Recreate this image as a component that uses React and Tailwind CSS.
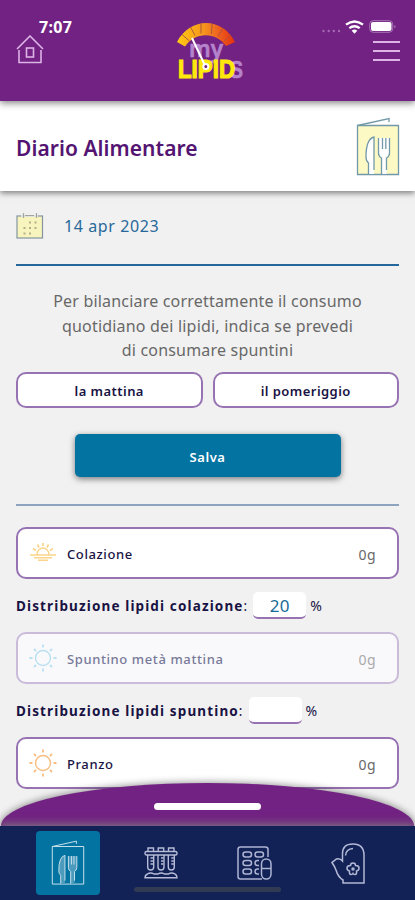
const FONT = "font-['Noto_Sans','Open_Sans',sans-serif]";

function HomeIcon() {
  return (
    <svg className="block" width="28" height="30" viewBox="0 0 28 30" fill="none" stroke="#dcb4e6" strokeWidth="1.6">
      <path d="M1 14 14 1l13 13" />
      <path d="M3 15v12.500h22V15" />
      <rect x="10.500" y="13" width="7" height="9" />
    </svg>
  );
}

function Logo() {
  return (
    <svg className="block overflow-visible" width="72" height="60" viewBox="0 0 72 60">
      <defs>
        <linearGradient id="gauge" x1="0" x2="1" y1="0" y2="0">
          <stop offset="0" stopColor="#ffcb12" />
          <stop offset="0.45" stopColor="#f6961d" />
          <stop offset="0.7" stopColor="#ee6420" />
          <stop offset="1" stopColor="#e5300f" />
        </linearGradient>
      </defs>
      <path d="M2 20C15-5 47-5.500 60 20L51 24C41 9.500 20 9.500 10 24.500Z" fill="url(#gauge)" />
      <path d="M7 12.500 14.500 19M15.500 5 20 13.500M26 1.500v10M37 1.500l-.5 10.500M48 6l-5 8.500M56 13l-7 6" stroke="#a8503c" strokeWidth="0.900" />
      <text x="14" y="35" textLength="34" lengthAdjust="spacingAndGlyphs" fontSize="24" fontWeight="600" fill="#b583cc" stroke="#b583cc" strokeWidth="0.600" className={FONT}>my</text>
      <text x="55" y="56" textLength="13" lengthAdjust="spacingAndGlyphs" fontSize="24" fontWeight="700" fill="#b583cc" stroke="#b583cc" strokeWidth="0.600" className="font-['Liberation_Sans',sans-serif]">S</text>
      <text x="3" y="56" textLength="57" lengthAdjust="spacingAndGlyphs" fontSize="26" fontWeight="700" fill="#ffe80c" stroke="#ffe80c" strokeWidth="1.200" className="font-['Liberation_Sans',sans-serif]">LIPID</text>
      <path d="M17 16 29.500 42.500" stroke="#fff" strokeWidth="2" />
      <circle cx="30.800" cy="44.500" r="2.500" fill="#722282" stroke="#fff" strokeWidth="2" />
    </svg>
  );
}

function StatusIcons() {
  return (
    <svg className="block" width="80" height="16" viewBox="-4 0 80 16">
      <g fill="#a568b5">
        <circle cx="-0.500" cy="11" r="1.200" />
        <circle cx="4.700" cy="11" r="1.200" />
        <circle cx="9.800" cy="11" r="1.200" />
        <circle cx="15" cy="11" r="1.200" />
      </g>
      <g fill="none" stroke="#fff" strokeWidth="2.300">
        <path d="M22 4.700q8.500-6.500 17 0" />
        <path d="M25.300 8.200q5.200-4 10.400 0" />
      </g>
      <path d="M27.700 10.700q2.800-2.200 5.600 0l-2.800 3Z" fill="#fff" />
      <rect x="45.700" y="0.700" width="23" height="11.600" rx="3.500" fill="none" stroke="#a873b6" />
      <rect x="47" y="2" width="20.500" height="9" rx="2" fill="#fff" />
      <path d="M70.500 5q2 1.700 0 3.500Z" fill="#b98cc5" />
    </svg>
  );
}

function MenuBookIcon({ className, stroke, fill, inner }) {
  return (
    <svg className={className} viewBox="0 0 44 60" fill="none" stroke={stroke} strokeWidth="1.300">
      <path d="M1.500 8.500h41V57.500h-41Z" fill={fill} />
      <path d="M1.500 8.500 33 1.500v3.500" />
      <path d="M12.500 57V46q-2.500-2-2.500-6 0-18 8-20V57Z" fill={inner} stroke="none" />
      <path d="M25.500 57V41q-3-1.500-3-5V21h11v15q0 3.500-3 5V57Z" fill={inner} stroke="none" />
      <path d="M12.500 57V46q-2.500-2-2.500-6 0-18 8-20V53M25.500 57V41q-3-1.500-3-5V21M26.500 21v11M29.800 21v11M33.500 21v15q0 3.500-3 5V53" />
    </svg>
  );
}

function CalendarIcon() {
  return (
    <svg className="block" width="28" height="26" viewBox="0 0 28 26">
      <rect x="1" y="3" width="25.500" height="22" fill="#f7f4bd" stroke="#8494a0" strokeWidth="1.200" />
      <path d="M5 3h17" stroke="#f1f1f1" strokeWidth="1.500" />
      <path d="M7.500 0v5M20.500 0v5M9 2.500h9" stroke="#a5a5a0" strokeWidth="1.200" />
      <path d="M13 8.500h2v2h-2zM18.500 8.500h2v2h-2zM7.500 14h2v2h-2zM13 14h2v2h-2zM18.500 14h2v2h-2zM7.500 19.500h2v2h-2zM13 19.500h2v2h-2z" fill="#b5af8b" />
    </svg>
  );
}

function SunIcon({ color }) {
  return (
    <svg className="block" width="28" height="28" viewBox="0 0 28 28" fill="none" stroke={color} strokeWidth="1.400">
      <circle cx="14" cy="14" r="7.500" />
      <path d="M14 .5v3M14 24.500v3M.5 14h3M24.500 14h3M5 5l2 2M21 21l2 2M5 23l2-2M21 7l2-2" strokeWidth="1.800" />
    </svg>
  );
}

function SunriseIcon() {
  return (
    <svg className="block" width="28" height="28" viewBox="0 0 28 28" fill="none" stroke="#fbd58b" strokeWidth="1.400">
      <path d="M8 15.500a6 6.500 0 0 1 12 0M1 16h26M5 18.800h18M9 21.200h10" />
      <path d="M14 4v3M8.500 5.500l1.500 3M19.500 5.500 18 8.500M4 9.500l3 2M24 9.500l-3 2" strokeWidth="1.700" />
    </svg>
  );
}

function TubesIcon() {
  return (
    <svg className="block" width="34" height="32" viewBox="0 0 34 32" fill="none" stroke="#b6bcd8" strokeWidth="1.400">
      <rect x="1" y="4.500" width="32" height="3.500" rx="1.500" />
      <path d="M4 4V1h5.500v3M14.200 4V1h5.500v3M24.500 4V1H30v3" />
      <path d="M3.700 8v12q0 3 3 3t3-3V8M14 8v12q0 3 3 3t3-3V8M24.300 8v12q0 3 3 3t3-3V8" />
      <path d="M6.500 11h2.500M6.500 14h2.500M6.500 17h2.500M17 11h2.500M17 14h2.500M17 17h2.500M27.300 11h2.500M27.300 14h2.500M27.300 17h2.500" />
      <path d="M3.500 27q3-2 6.500 0h4q3-2 6.500 0h4q3-2 6.500 0 2 1 2 3.800H1Q1 28 3.500 27Z" />
    </svg>
  );
}

function PillsIcon() {
  return (
    <svg className="block" width="35" height="34" viewBox="0 0 35 34" fill="none" stroke="#aeb5d3" strokeWidth="1.500">
      <path d="M31 11V3.500Q31 1 28.500 1h-25Q1 1 1 3.500v27Q1 33 3.500 33H25" />
      <rect x="6" y="6" width="8.500" height="5" rx="2.500" />
      <rect x="18" y="6" width="8.500" height="5" rx="2.500" />
      <rect x="6" y="14.500" width="8.500" height="5" rx="2.500" />
      <rect x="6" y="23" width="8.500" height="5" rx="2.500" />
      <path d="M22 14.500h-1.500a2.500 2.500 0 0 0 0 5H22M22 23h-1.500a2.500 2.500 0 0 0 0 5H22" />
      <rect x="24.500" y="13" width="9.500" height="20" rx="4.700" />
      <path d="M24.500 22.500H34" />
    </svg>
  );
}

function MittIcon() {
  return (
    <svg className="block" width="34" height="41" viewBox="0 0 34 41" fill="none" stroke="#b3b9d6" strokeWidth="1.500">
      <path d="M12 40h21V12.500Q33 1 22 1T11.500 11.500v6.500Q9 15 5.500 16L1 19.500Q4 24 5 27q2 7 7 10Z" />
      <path d="M14.500 12.500Q15 6 22 5.500" />
      <path d="M19.500 22.500Q19.500 20 22 20t2.500 2.500Q28 22.500 28 25t-2.500 3Q26 31.500 24 31.500 22.500 31.500 22 30.500 21.500 31.500 20 31.500 18 31.500 18.500 28 16 27.500 16 25t3.500-2.500Z" />
      <circle cx="22" cy="26" r="1" />
    </svg>
  );
}

function MealCard({ icon, name, faded }) {
  return (
    <div className={`flex h-[52px] items-center rounded-[10px] border-2 pr-[21px] pl-[11px] ${faded ? "border-[#cabbda] bg-[#f9f9fb]" : "border-[#9873b3] bg-white"}`}>
      <div className="w-[38px]">{icon}</div>
      <span className={`pt-[4px] text-[13px] font-medium tracking-[0.6px] ${faded ? "text-[#78799a]" : "text-[#191344]"}`}>{name}</span>
      <span className={`ml-auto pt-[4px] text-[14px] tracking-[0.4px] ${faded ? "text-[#aaaaaa]" : "text-[#686868]"}`}>0g</span>
    </div>
  );
}

function Distribution({ label, value }) {
  return (
    <div className="flex h-[27px] items-center text-[#191344]">
      <span className="pt-[2px] text-[13.5px] font-bold tracking-[1.130px] whitespace-nowrap">{label}<span className="font-normal">:</span></span>
      <div className="ml-[5px] flex h-[27px] w-[53px] items-center justify-center rounded-[5px] border-b-2 border-[#9873b3] bg-white pt-[3px] text-[17px] tracking-[0.4px] text-[#176b99]">{value}</div>
      <span className="ml-[4px] pt-[1px] text-[14px]">%</span>
    </div>
  );
}

export default function App() {
  return (
    <div className={`flex h-[900px] w-[415px] flex-col overflow-hidden bg-[#f1f1f1] ${FONT}`}>
      {/* Top bar */}
      <header className="z-20 flex h-[101px] shrink-0 bg-[#722282] pr-[15px] pl-[16px] shadow-[0_2px_7px_rgba(0,0,0,0.5)]">
        <div className="w-[159px] pt-[18px]">
          <div className="h-[17px] pl-[23px] text-[16px] leading-[18px] font-bold tracking-[0.300px] text-white">7:07</div>
          <HomeIcon />
        </div>
        <div className="pt-[22px]">
          <Logo />
        </div>
        <div className="ml-auto flex flex-col items-end pt-[20px]">
          <StatusIcons />
          <div className="mt-[5px] flex flex-col gap-[7px]">
            <div className="h-[2px] w-[27px] bg-[#dcb4e6]" />
            <div className="h-[2px] w-[27px] bg-[#dcb4e6]" />
            <div className="h-[2px] w-[27px] bg-[#dcb4e6]" />
          </div>
        </div>
      </header>

      {/* Page title */}
      <div className="z-10 flex h-[90px] shrink-0 items-center justify-between bg-white pr-[15px] pl-[16px] shadow-[0_2px_6px_rgba(0,0,0,0.5)]">
        <h1 className="pt-[5px] text-[21px] font-semibold tracking-[0.050px] text-[#541572]">Diario Alimentare</h1>
        <MenuBookIcon className="mt-[2px] h-[60px] w-[44px]" stroke="#7299a8" fill="#fdf9c4" inner="#ffffff" />
      </div>

      <main className="h-[635px] shrink-0 overflow-hidden px-[16px]">
        <div className="flex h-[75px] items-center border-b-2 border-[#24679b] pb-[4px]">
          <CalendarIcon />
          <span className="ml-[20px] text-[16px] tracking-[0.600px] text-[#27699a]">14 apr 2023</span>
        </div>

        <p className="mt-[23px] text-center text-[16px] leading-[24.500px] tracking-[0.190px] text-[#686868]">
          Per bilanciare correttamente il consumo
          <br />
          quotidiano dei lipidi, indica se prevedi
          <br />
          di consumare spuntini
        </p>

        <div className="mt-[9px] grid grid-cols-2 gap-[10px] text-[13px] font-semibold tracking-[0.450px] text-[#191344]">
          <button className="h-[36px] rounded-[10px] border-2 border-[#9873b3] bg-white pt-[4px]">la mattina</button>
          <button className="h-[36px] rounded-[10px] border-2 border-[#9873b3] bg-white pt-[4px]">il pomeriggio</button>
        </div>

        <button className="mx-auto mt-[26px] block h-[43px] w-[266px] rounded-[5px] bg-[#0373a2] pt-[5px] text-[13px] font-semibold tracking-[0.600px] text-white shadow-[0_2px_6px_rgba(0,0,0,0.5)]">Salva</button>

        <div className="mt-[27px] h-[2px] bg-[#8ea3c0]" />

        <div className="mt-[21px] flex flex-col gap-[13px]">
          <MealCard icon={<SunriseIcon />} name="Colazione" />
          <Distribution label="Distribuzione lipidi colazione" value="20" />
          <MealCard icon={<SunIcon color="#b9e0f1" />} name="Spuntino metà mattina" faded />
          <Distribution label="Distribuzione lipidi spuntino" value="" />
          <MealCard icon={<SunIcon color="#f9bd83" />} name="Pranzo" />
        </div>
      </main>

      {/* Bottom navigation with the pull-up sheet lying over the list */}
      <footer className="relative h-[74px] shrink-0">
        <div className="absolute -top-[43px] right-px left-px flex h-[43px] justify-center rounded-t-[50%_100%] bg-[#722282] pt-[20px] shadow-[0_-1px_7px_rgba(0,0,0,0.4)]">
          <div className="h-[7px] w-[107px] rounded-full bg-white" />
        </div>
        <nav className="relative flex h-full items-center bg-[#122156] shadow-[0_-2px_8px_rgba(125,125,125,0.9)]">
          <div className="ml-[36px] flex h-[64px] w-[64px] items-center justify-center rounded-[4px] bg-[#0373a2]">
            <MenuBookIcon className="h-[46px] w-[34px]" stroke="#c5e0eb" fill="none" inner="#4c9abc" />
          </div>
          <div className="ml-[44px]"><TubesIcon /></div>
          <div className="ml-[59px]"><PillsIcon /></div>
          <div className="ml-[59px]"><MittIcon /></div>
          <div className="absolute bottom-[8px] left-[134px] h-[5px] w-[147px] rounded-full bg-[#303b53]" />
        </nav>
      </footer>
    </div>
  );
}
